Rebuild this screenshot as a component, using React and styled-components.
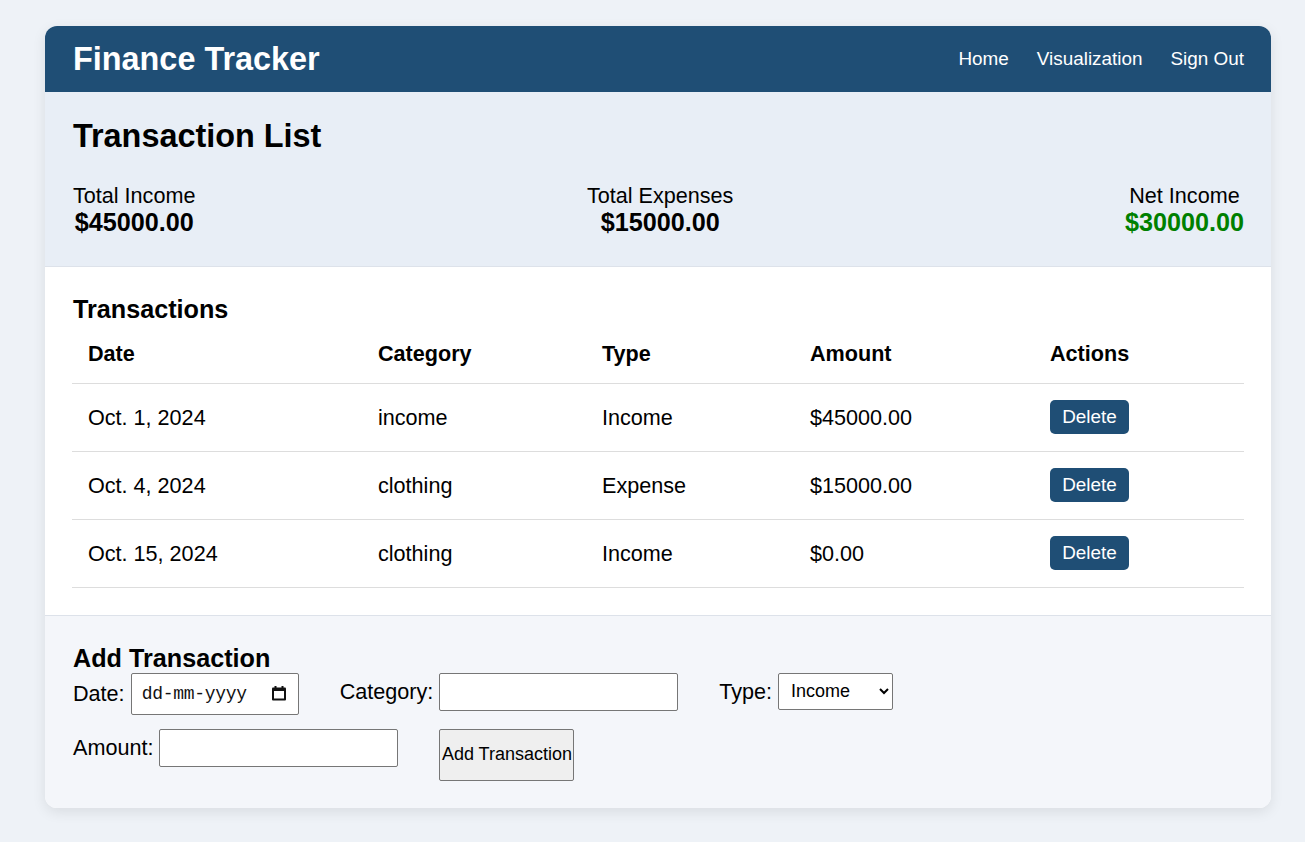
import React from "react";
import styled, { createGlobalStyle } from "styled-components";

const Global = createGlobalStyle`
  html, body { margin: 0; padding: 0; }
  body {
    background: #eef2f7;
    font-family: "Liberation Sans", Arial, sans-serif;
    color: #000;
  }
`;

const Page = styled.div`
  padding: 26px 0 34px 45px;
`;

const Card = styled.div`
  width: 1226px;
  border-radius: 12px;
  overflow: hidden;
  background: #fff;
  box-shadow: 0 4px 14px rgba(0, 0, 0, 0.09);
`;

const Header = styled.header`
  height: 66px;
  background: #1f4e75;
  display: flex;
  align-items: center;
  justify-content: space-between;
  padding: 0 27px 0 28px;
  color: #fff;
`;

const Brand = styled.div`
  font-size: 32.4px;
  font-weight: bold;
`;

const Nav = styled.nav`
  display: flex;
  gap: 28px;
  font-size: 18.9px;
`;

const NavLink = styled.a`
  color: #fff;
  text-decoration: none;
`;

const Summary = styled.section`
  background: #e8eef6;
  padding: 26px 27px 29px 28px;
  border-bottom: 1px solid #dde2ea;
`;

const Title = styled.h1`
  margin: 0 0 28px;
  font-size: 32.4px;
  line-height: 37px;
`;

const Totals = styled.div`
  display: flex;
  justify-content: space-between;
`;

const Total = styled.div`
  text-align: center;
`;

const TotalLabel = styled.div`
  font-size: 21.6px;
  line-height: 25px;
`;

const TotalValue = styled.div`
  font-size: 25.2px;
  line-height: 29px;
  font-weight: bold;
  color: ${(p) => p.$color || "#000"};
`;

const TableSection = styled.section`
  background: #fff;
  padding: 28px 27px 27px 27px;
  border-bottom: 1px solid #dde2ea;
`;

const SectionTitle = styled.h2`
  margin: 0 0 0 1px;
  font-size: 25.2px;
  line-height: 29px;
`;

const Table = styled.table`
  width: 100%;
  border-collapse: collapse;
  table-layout: fixed;
`;

const Col = styled.col`
  width: ${(p) => p.$w}px;
`;

const Th = styled.th`
  text-align: left;
  font-size: 21.6px;
  line-height: 25px;
  padding: 16.5px 16px 17px;
  border-bottom: 1px solid #ddd;
`;

const Td = styled.td`
  font-size: 21.6px;
  line-height: 25px;
  padding: 16.5px 16px;
  border-bottom: 1px solid #ddd;
  vertical-align: middle;
`;

const DeleteButton = styled.button`
  display: inline-block;
  background: #1f4e75;
  color: #fff;
  border: none;
  border-radius: 5px;
  font-family: "Liberation Sans", Arial, sans-serif;
  font-size: 18.9px;
  line-height: 22px;
  height: 34px;
  width: 79px;
  padding: 0;
  cursor: pointer;
  vertical-align: middle;
`;

const AddSection = styled.section`
  background: #f4f6fa;
  padding: 28px 27px 27px 27px;
`;

const Form = styled.form`
  display: flex;
  flex-wrap: wrap;
  align-items: flex-start;
  gap: 14px 41px;
  width: 860px;
  padding-left: 1px;
`;

const Field = styled.div`
  display: flex;
  align-items: center;
  gap: 6px;
  height: ${(p) => p.$h}px;
`;

const Label = styled.label`
  font-size: 21.6px;
  line-height: 25px;
`;

const TextInput = styled.input`
  box-sizing: border-box;
  width: 239px;
  height: 38px;
  border: 1px solid #767676;
  border-radius: 2px;
  background: #fff;
  font-size: 18px;
  padding: 0 6px;
  font-family: "Liberation Sans", Arial, sans-serif;
`;

const DateBox = styled.div`
  box-sizing: border-box;
  width: 168px;
  height: 42px;
  border: 1px solid #767676;
  border-radius: 2px;
  background: #fff;
  display: flex;
  align-items: center;
  justify-content: space-between;
  padding: 0 12px 0 10px;
  font-family: "Liberation Mono", "DejaVu Sans Mono", monospace;
  font-size: 18px;
  letter-spacing: -0.3px;
  color: #111;
`;

const Select = styled.select`
  box-sizing: border-box;
  width: 115px;
  height: 37px;
  border: 1px solid #767676;
  border-radius: 2px;
  background: #fff;
  font-size: 18px;
  padding: 0 8px;
  font-family: "Liberation Sans", Arial, sans-serif;
  color: #000;
`;

const SubmitButton = styled.button`
  box-sizing: border-box;
  width: 135px;
  height: 52px;
  padding: 0;
  background: #efefef;
  border: 1px solid #767676;
  border-radius: 2px;
  font-family: "Liberation Sans", Arial, sans-serif;
  font-size: 18px;
  color: #000;
`;

const rows = [
  { date: "Oct. 1, 2024", category: "income", type: "Income", amount: "$45000.00" },
  { date: "Oct. 4, 2024", category: "clothing", type: "Expense", amount: "$15000.00" },
  { date: "Oct. 15, 2024", category: "clothing", type: "Income", amount: "$0.00" },
];

const columns = [
  { name: "Date", w: 290 },
  { name: "Category", w: 224 },
  { name: "Type", w: 208 },
  { name: "Amount", w: 240 },
  { name: "Actions", w: 210 },
];

const CalendarIcon = () => (
  <svg width="14" height="15" viewBox="0 0 14 15">
    <rect x="0" y="1.5" width="14" height="13" rx="1" fill="#111" />
    <rect x="2" y="5" width="10" height="7.5" fill="#fff" />
    <rect x="2.5" y="0" width="2" height="3" fill="#111" />
    <rect x="9.5" y="0" width="2" height="3" fill="#111" />
  </svg>
);

export default function App() {
  return (
    <>
      <Global />
      <Page>
        <Card>
          <Header>
            <Brand>Finance Tracker</Brand>
            <Nav>
              <NavLink href="#">Home</NavLink>
              <NavLink href="#">Visualization</NavLink>
              <NavLink href="#">Sign Out</NavLink>
            </Nav>
          </Header>
          <Summary>
            <Title>Transaction List</Title>
            <Totals>
              <Total>
                <TotalLabel>Total Income</TotalLabel>
                <TotalValue>$45000.00</TotalValue>
              </Total>
              <Total>
                <TotalLabel>Total Expenses</TotalLabel>
                <TotalValue>$15000.00</TotalValue>
              </Total>
              <Total>
                <TotalLabel>Net Income</TotalLabel>
                <TotalValue $color="#008000">$30000.00</TotalValue>
              </Total>
            </Totals>
          </Summary>
          <TableSection>
            <SectionTitle>Transactions</SectionTitle>
            <Table>
              <colgroup>
                {columns.map((c) => (
                  <Col key={c.name} $w={c.w} />
                ))}
              </colgroup>
              <thead>
                <tr>
                  {columns.map((c) => (
                    <Th key={c.name}>{c.name}</Th>
                  ))}
                </tr>
              </thead>
              <tbody>
                {rows.map((r) => (
                  <tr key={r.date}>
                    <Td>{r.date}</Td>
                    <Td>{r.category}</Td>
                    <Td>{r.type}</Td>
                    <Td>{r.amount}</Td>
                    <Td>
                      <DeleteButton type="button">Delete</DeleteButton>
                    </Td>
                  </tr>
                ))}
              </tbody>
            </Table>
          </TableSection>
          <AddSection>
            <SectionTitle>Add Transaction</SectionTitle>
            <Form onSubmit={(e) => e.preventDefault()}>
              <Field $h={42}>
                <Label>Date:</Label>
                <DateBox>
                  <span>dd-mm-yyyy</span>
                  <CalendarIcon />
                </DateBox>
              </Field>
              <Field $h={38}>
                <Label>Category:</Label>
                <TextInput type="text" />
              </Field>
              <Field $h={37}>
                <Label>Type:</Label>
                <Select defaultValue="Income">
                  <option>Income</option>
                  <option>Expense</option>
                </Select>
              </Field>
              <Field $h={38}>
                <Label>Amount:</Label>
                <TextInput type="number" />
              </Field>
              <SubmitButton type="submit">Add Transaction</SubmitButton>
            </Form>
          </AddSection>
        </Card>
      </Page>
    </>
  );
}
